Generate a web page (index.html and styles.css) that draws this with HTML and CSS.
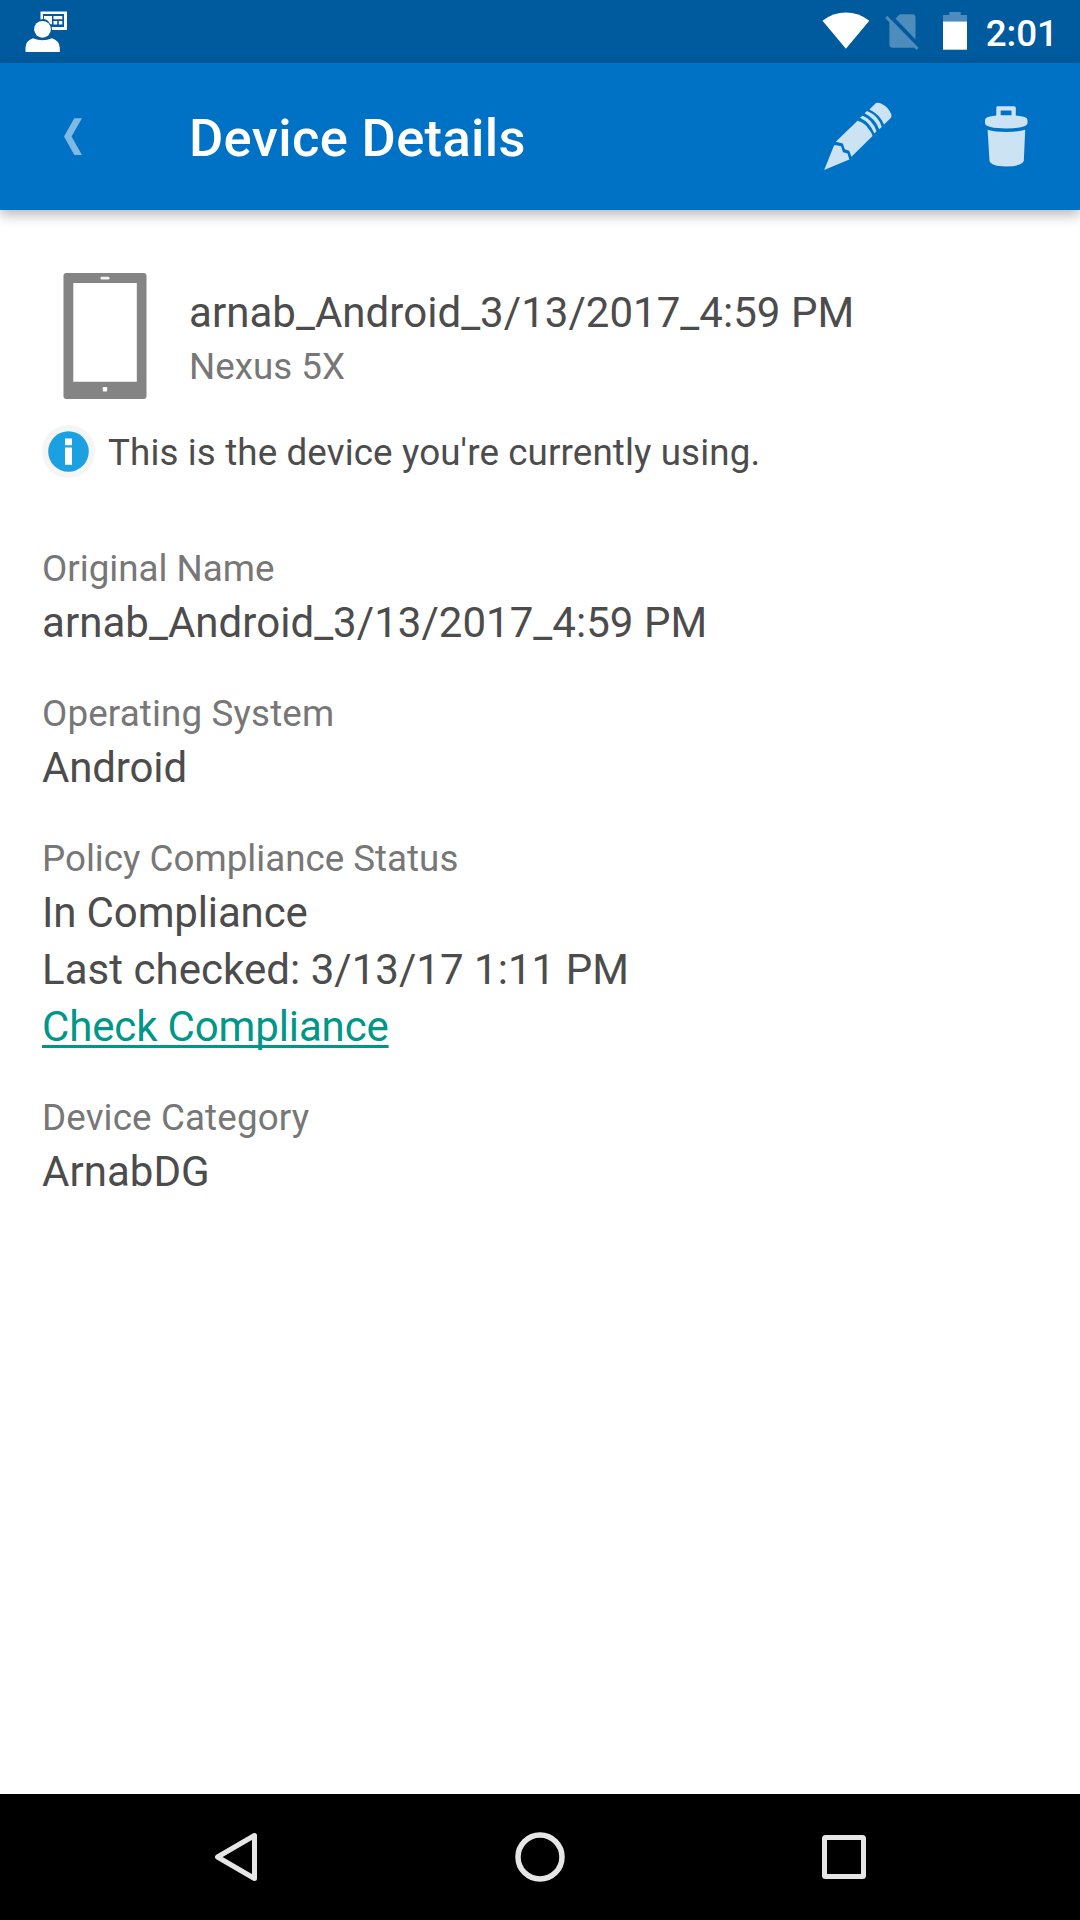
FILE: index.html
```html
<!DOCTYPE html>
<html lang="en">
<head>
<meta charset="utf-8">
<title>Device Details</title>
<link rel="stylesheet" href="styles.css">
</head>
<body>
<div class="screen">
  <div class="status-bar">
    <svg class="icon-portal" width="42" height="42" viewBox="0 0 42 42">
      <path fill="#fff" fill-rule="evenodd" d="M15.500.5H42V19H27a10.500 10.500 0 0 0-.4-3H39V3H18V7.900q-1.300.1-2.500.6z"/>
      <path fill="#fff" d="M19 5h8v8.300h-1.700Q23 8.500 19 8zM28.500 5h8.800v3.300h-8.800zM28.500 10h3.700v3.600h-3.700zM33.800 10h3.500v3.600h-3.500z"/>
      <circle cx="17.500" cy="18.300" r="8.400" fill="#fff"/>
      <path fill="#fff" d="M.5 41V36.500Q1 29.500 8 27.300q9.500 4 19 0Q34 29.500 34.800 36.500V41z"/>
    </svg>
    <div class="status-icons">
      <svg class="icon-wifi" width="48" height="38" viewBox="0 0 48 38"><path fill="#fff" d="M.5 8.800Q11 .6 23.900.6T47.300 8.800L23.900 36.800z"/></svg>
      <svg class="icon-sim" width="34" height="38" viewBox="0 0 34 38"><g fill="#4d8cbb"><path d="M10.500 4.500 14 1Q14.700.3 16 .3H27Q30.500.3 30.500 3.500V25.500z"/><path d="M4.400 7.500 30.500 33.200 28 33.800H8Q4.400 33.800 4.400 30.500z"/><path d="M2.200 1.800.2 4 31.600 36l2-2.200z"/></g></svg>
      <svg class="icon-battery" width="24" height="38" viewBox="0 0 24 38"><path fill="#4d8cbb" d="M6.300 0h11.400v3H24v7H0V3h6.300z"/><path fill="#fff" d="M0 9.600h24V37.700H0z"/></svg>
      <span class="clock">2:01</span>
    </div>
  </div>

  <header class="app-bar">
    <svg class="icon-up" width="18" height="37" viewBox="0 0 18 37"><path fill="#80b9e3" d="M10.300.3H18L7.500 18.500 18 37h-7.700L0 18.500z"/></svg>
    <h1 class="title">Device Details</h1>
    <div class="actions">
      <svg class="icon-edit" width="68" height="68" viewBox="0 0 68 68"><g fill="#cce3f4">
        <path d="M.2 67.900 10 43.500Q11 42.900 12.500 43.300L17 44.300 19 50.200 23.500 51.500 25.300 57.600z"/>
        <path d="M11.800 39.800 33.500 18.800Q41 20.800 45 27.500 48 31 48.500 34L27.500 54.700 25.200 48.800 20.800 47.200 18.800 41.500z"/>
        <path d="M36 15.800 38.600 13.800Q48.500 17.500 52.500 29.300L50.400 31.600Q46 20.500 36 15.800z"/>
        <path d="M40.600 11.300 43 9Q54.500 13.500 57.800 25L55.200 27.200Q51 16.500 40.600 11.300z"/>
        <path d="M45.400 7.400 52 1Q54 .1 57 1.500 64.500 5 67.400 12.500 67.900 14.800 66.300 16.400L60 22.500Q55.500 12 45.400 7.400z"/>
      </g></svg>
      <svg width="43" height="61" viewBox="0 0 43 61"><g fill="#cce3f4">
        <path fill-rule="evenodd" d="M12.300.2H29Q30.800.2 30.800 2V9.600Q42.500 10.600 42.500 14V17.300Q42 22.400 21.300 22.400T0 17.300V14Q0 10.600 11.300 9.600V2Q11.300.2 12.300.2zM15.700 4.500V9.200H26.500V4.500z"/>
        <path d="M2.600 23.800Q10 26 21.500 26T40.200 23.800L38.800 55Q36.500 60.400 21.300 60.400T4.500 55z"/>
      </g></svg>
    </div>
  </header>

  <main class="content">
    <section class="device">
      <svg width="84" height="126" viewBox="0 0 84 126">
        <rect x=".5" width="83" height="126" rx="3" fill="#848484"/>
        <path fill="#fff" d="M10.300 10H73.800V108.700H10.300z"/>
        <rect x="37.500" y="3.700" width="9" height="2.800" rx="1.300" fill="#f4f4f4"/>
        <rect x="39.700" y="114" width="4.500" height="4.500" rx="1" fill="#fff"/>
      </svg>
      <div class="device-text">
        <div class="device-name">arnab_Android_3/13/2017_4:59 PM</div>
        <div class="device-model">Nexus 5X</div>
      </div>
    </section>

    <section class="notice">
      <svg width="53" height="53" viewBox="0 0 53 53"><circle cx="26.500" cy="26.500" r="26.500" fill="#f5f5f5"/><circle cx="26.500" cy="26.500" r="20.300" fill="#1ba1e2"/><path fill="#fff" d="M23 13.500h7v6.800h-7zM23 22.500h7v17.200h-7z"/></svg>
      <span class="notice-text">This is the device you're currently using.</span>
    </section>

    <dl class="fields">
      <div class="field"><dt>Original Name</dt><dd>arnab_Android_3/13/2017_4:59 PM</dd></div>
      <div class="field"><dt class="loose">Operating System</dt><dd class="tight">Android</dd></div>
      <div class="field"><dt>Policy Compliance Status</dt><dd class="tight">In Compliance</dd><dd>Last checked: 3/13/17 1:11 PM</dd><dd class="tight"><a class="link" href="#">Check Compliance</a></dd></div>
      <div class="field"><dt class="loose">Device Category</dt><dd>ArnabDG</dd></div>
    </dl>
  </main>

  <nav class="nav-bar">
    <svg width="52" height="52" viewBox="0 0 52 52"><path fill="none" stroke="#e6e6e6" stroke-width="5" stroke-linejoin="round" d="M44.500 4.500V47.500L7.500 26z"/></svg>
    <svg width="52" height="52" viewBox="0 0 52 52"><circle cx="26" cy="26" r="22" fill="none" stroke="#e6e6e6" stroke-width="5.500"/></svg>
    <svg width="52" height="52" viewBox="0 0 52 52"><rect x="6.500" y="6.500" width="39" height="39" rx="1" fill="none" stroke="#e6e6e6" stroke-width="5" stroke-linejoin="round"/></svg>
  </nav>
</div>
</body>
</html>
```
FILE: styles.css
```css
body {
  margin: 0;
  background: #fff;
  color: #4c4c4c;
  font-family: Roboto, sans-serif;
  font-size: 42px;
}

svg {
  display: block;
  flex: none;
}

.screen {
  display: flex;
  flex-direction: column;
  width: 1080px;
  height: 1920px;
  overflow: hidden;
}

.status-bar {
  display: flex;
  justify-content: space-between;
  align-items: flex-start;
  box-sizing: border-box;
  height: 63px;
  padding: 11px 22px 0 25px;
  background: #005a9e;
}

.status-icons {
  display: flex;
  align-items: flex-start;
  padding-top: 1px;
}

.icon-sim {
  margin: 2px 0 0 15px;
}

.icon-battery {
  margin-left: 24px;
}

.clock {
  margin: 0 0 0 19px;
  color: #fff;
  font-size: 36.75px;
  font-weight: 500;
  line-height: 43px;
}

.app-bar {
  display: flex;
  align-items: center;
  box-sizing: border-box;
  height: 147px;
  padding: 0 52px 0 64px;
  background: #0072c6;
  box-shadow: 0 5px 12px rgba(0, 0, 0, 0.28);
}

.title {
  flex: 1;
  margin: 2px 0 0 107px;
  color: #fff;
  font-size: 52.5px;
  font-weight: 500;
  line-height: 62px;
  letter-spacing: 0.35px;
}

.actions {
  display: flex;
  align-items: center;
  gap: 93px;
}

.icon-edit {
  margin-bottom: 2px;
}

.content {
  flex: 1;
  padding: 63px 42px 0;
}

.device {
  display: flex;
  gap: 42px;
  padding-left: 21px;
}

.device-text {
  padding-top: 15px;
}

.device-name,
dd {
  letter-spacing: 0.04px;
}

.device-name {
  line-height: 50px;
}

.device-model {
  margin-top: 7px;
  color: #777;
  font-size: 36.75px;
  line-height: 43px;
}

.notice {
  display: flex;
  align-items: center;
  gap: 13px;
  margin: 26px 0 0;
}

.notice-text {
  padding-top: 2px;
  font-size: 36.75px;
  line-height: 43px;
  letter-spacing: 0.12px;
}

.fields {
  display: flex;
  flex-direction: column;
  gap: 37px;
  margin: 67px 0 0;
}

dt {
  margin-bottom: 1px;
  color: #777;
  font-size: 36.75px;
  line-height: 48px;
}

dd {
  margin: 0;
  line-height: 57px;
}

.field {
  padding-bottom: 2px;
}

.loose {
  letter-spacing: 0.14px;
}

.tight {
  letter-spacing: -0.14px;
}

.link {
  color: #009688;
  text-decoration-thickness: 3px;
  text-decoration-skip-ink: none;
  text-underline-offset: 4px;
}

.nav-bar {
  display: flex;
  justify-content: space-between;
  align-items: center;
  box-sizing: border-box;
  height: 126px;
  padding: 0 210px;
  background: #000;
}
```
